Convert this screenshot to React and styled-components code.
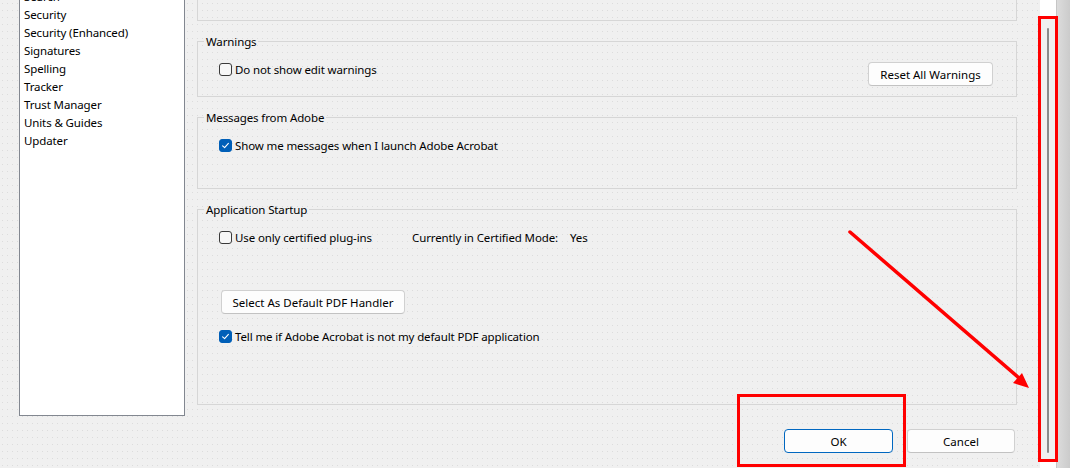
import React from 'react';
import styled, { createGlobalStyle } from 'styled-components';

const Global = createGlobalStyle`
  html, body { margin: 0; padding: 0; }
  body {
    width: 1070px; height: 468px; overflow: hidden;
    background: #f0f0f0;
    font-family: "Segoe UI", "Noto Sans", "Liberation Sans", sans-serif;
    font-size: 11.5px; letter-spacing: -0.12px; color: #000;
  }
`;

const Screen = styled.div`
  position: relative;
  width: 1070px; height: 468px; overflow: hidden;
  display: flex;
  background-color: #f0f0f0;
  background-image: radial-gradient(circle, #dcdcdc 0.6px, transparent 0.9px);
  background-size: 5px 7px;
`;

const Dialog = styled.div`
  width: 1040px;
  display: flex; flex-direction: column;
`;

const Body = styled.div`
  display: flex; align-items: flex-start;
  margin-top: -14px;
`;

const CategoryList = styled.ul`
  list-style: none;
  margin: 0 0 0 19px; padding: 1px 0 0;
  width: 166px; height: 430px; box-sizing: border-box;
  background: #fff; border: 1px solid #828790;
`;

const Category = styled.li`
  padding-left: 4px; height: 18px; line-height: 18px; white-space: nowrap;
`;

const Panel = styled.div`
  margin-left: 12px; width: 820px;
  display: flex; flex-direction: column; gap: 12px;
`;

const Group = styled.fieldset`
  margin: 0; min-width: 0; box-sizing: border-box;
  border: 1px solid #d6d6d6;
  padding: ${p => p.$pad || '12px 23px 10px 21px'};
  height: ${p => p.$height || 'auto'};
`;

const Legend = styled.legend`
  font-size: 11.5px; line-height: 16px;
  padding: 1px 2px 0; margin-left: -15px;
`;

const SplitRow = styled.div`
  display: flex; justify-content: space-between; align-items: flex-start;
`;

const CheckRow = styled.label`
  display: flex; align-items: center; gap: 3px;
  height: 16px; line-height: 16px; white-space: nowrap;
  margin-top: ${p => p.$mt || 0}px;
`;

const Box = styled.span`
  width: 13px; height: 13px; box-sizing: border-box; flex: none;
  border-radius: 3px;
  border: 1px solid ${p => (p.$checked ? '#005fb8' : '#3a3a3a')};
  background: ${p => (p.$checked ? '#005fb8' : '#f7f7f7')};
  display: flex; align-items: center; justify-content: center;
`;

const Label = styled.span`
  padding-top: 1px;
`;

const StatusGrid = styled.div`
  display: grid; grid-template-columns: 193px 158px auto;
  align-items: center; height: 16px; line-height: 16px; white-space: nowrap;
`;

const Button = styled.button`
  font: inherit; color: #000;
  height: 24px; width: ${p => p.$w}px; box-sizing: border-box;
  margin-top: ${p => p.$mt || 0}px;
  margin-left: ${p => p.$ml || 0}px;
  background: #fdfdfd;
  border: 1px solid ${p => (p.$primary ? '#0067c0' : '#d0d0d0')};
  border-bottom-color: ${p => (p.$primary ? '#0067c0' : '#c2c2c2')};
  border-radius: 4px; padding: 0;
  display: flex; align-items: center; justify-content: center;
`;

const Footer = styled.div`
  display: flex; justify-content: flex-end; gap: 14px;
  margin-top: 13px; padding-right: 25px;
`;

const ScrollStrip = styled.div`
  width: 16px; background: #fff;
  display: flex; flex-direction: column;
`;

const Track = styled.div`
  flex: 1; margin: 16px 0 6px;
  background: #f0f0f0;
  display: flex;
`;

const Thumb = styled.div`
  width: 2px; margin: 12px 0 9px 7px;
  background: #8a8a8a; border-radius: 1px;
`;

const Edge = styled.div`
  width: 13px;
  border-left: 1px solid #c6c6c6;
  background: linear-gradient(to right, #dcdcdc, #cbcbcb);
`;

const RedBox = styled.div`
  position: absolute; box-sizing: border-box;
  left: ${p => p.$x}px; top: ${p => p.$y}px;
  width: ${p => p.$w}px; height: ${p => p.$h}px;
  border: 3px solid #ff0000;
  pointer-events: none;
`;

const Annotation = styled.svg`
  position: absolute; left: 0; top: 0;
  width: 1070px; height: 468px; pointer-events: none;
`;

function Check({ checked, children, mt }) {
  return (
    <CheckRow $mt={mt}>
      <Box $checked={checked}>
        {checked && (
          <svg width="9" height="9" viewBox="0 0 9 9">
            <path d="M1.6 4.8 L3.6 6.6 L7.4 2.4" fill="none" stroke="#fff" strokeWidth="1.1" strokeLinecap="round" strokeLinejoin="round" />
          </svg>
        )}
      </Box>
      <Label>{children}</Label>
    </CheckRow>
  );
}

const categories = [
  'Search', 'Security', 'Security (Enhanced)', 'Signatures', 'Spelling',
  'Tracker', 'Trust Manager', 'Units & Guides', 'Updater',
];

export default function App() {
  return (
    <>
      <Global />
      <Screen>
        <Dialog>
          <Body>
            <CategoryList>
              {categories.map(c => <Category key={c}>{c}</Category>)}
            </CategoryList>
            <Panel>
              <Group $height="35px" $pad="0" />
              <Group $pad="11px 23px 10px 21px">
                <Legend>Warnings</Legend>
                <SplitRow>
                  <Check>Do not show edit warnings</Check>
                  <Button $w={125} $mt={1}>Reset All Warnings</Button>
                </SplitRow>
              </Group>
              <Group $pad="11px 23px 35px 21px">
                <Legend>Messages from Adobe</Legend>
                <Check checked>Show me messages when I launch Adobe Acrobat</Check>
              </Group>
              <Group $pad="11px 23px 60px 21px">
                <Legend>Application Startup</Legend>
                <StatusGrid>
                  <Check>Use only certified plug-ins</Check>
                  <Label>Currently in Certified Mode:</Label>
                  <Label>Yes</Label>
                </StatusGrid>
                <Button $w={184} $mt={45} $ml={2}>Select As Default PDF Handler</Button>
                <Check checked mt={14}>Tell me if Adobe Acrobat is not my default PDF application</Check>
              </Group>
            </Panel>
          </Body>
          <Footer>
            <Button $w={109} $primary>OK</Button>
            <Button $w={108}>Cancel</Button>
          </Footer>
        </Dialog>
        <ScrollStrip>
          <Track><Thumb /></Track>
        </ScrollStrip>
        <Edge />
        <RedBox $x={1038} $y={16} $w={20} $h={446} />
        <RedBox $x={737} $y={394} $w={169} $h={73} />
        <Annotation viewBox="0 0 1070 468">
          <line x1="850" y1="232" x2="1019" y2="378" stroke="#ff0000" strokeWidth="3.5" strokeLinecap="round" />
          <polygon points="1029,388 1013,383 1022,373" fill="#ff0000" />
        </Annotation>
      </Screen>
    </>
  );
}
